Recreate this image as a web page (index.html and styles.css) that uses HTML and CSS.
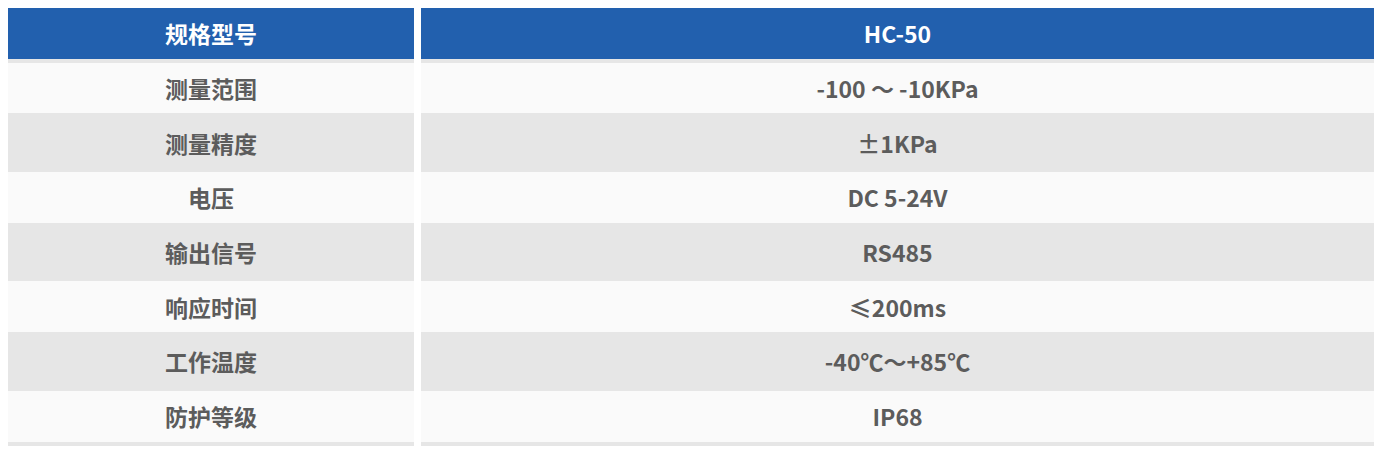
FILE: index.html
```html
<!DOCTYPE html>
<html lang="zh-CN">
<head>
<meta charset="utf-8">
<title>规格参数</title>
<link rel="stylesheet" href="styles.css">
</head>
<body>
<div class="spec">
  <div class="cell head">规格型号</div><div class="cell head">HC-50</div>
  <div class="cell odd">测量范围</div><div class="cell odd">-100 ～ -10KPa</div>
  <div class="cell even">测量精度</div><div class="cell even">±1KPa</div>
  <div class="cell odd">电压</div><div class="cell odd">DC 5-24V</div>
  <div class="cell even">输出信号</div><div class="cell even">RS485</div>
  <div class="cell odd">响应时间</div><div class="cell odd">≤200ms</div>
  <div class="cell even">工作温度</div><div class="cell even">-40℃～+85℃</div>
  <div class="cell odd">防护等级</div><div class="cell odd">IP68</div>
</div>
</body>
</html>
```

FILE: styles.css
```css
html, body {
  margin: 0;
  padding: 0;
  background: #ffffff;
}
body {
  padding: 8px 6px 0 8px;
  font-family: "Noto Sans CJK SC", "Noto Sans", sans-serif;
}
.spec {
  display: grid;
  grid-template-columns: 406px 953px;
  column-gap: 7px;
}
.cell {
  height: 50.7px;
  border-bottom: 4px solid #e6e6e6;
  display: flex;
  align-items: center;
  justify-content: center;
  font-size: 23px;
  font-weight: 700;
  color: #5c5c5c;
  white-space: pre;
}
.head {
  background: #2260ae;
  color: #ffffff;
}
.odd {
  background: #fafafa;
}
.even {
  background: #e6e6e6;
}
```
